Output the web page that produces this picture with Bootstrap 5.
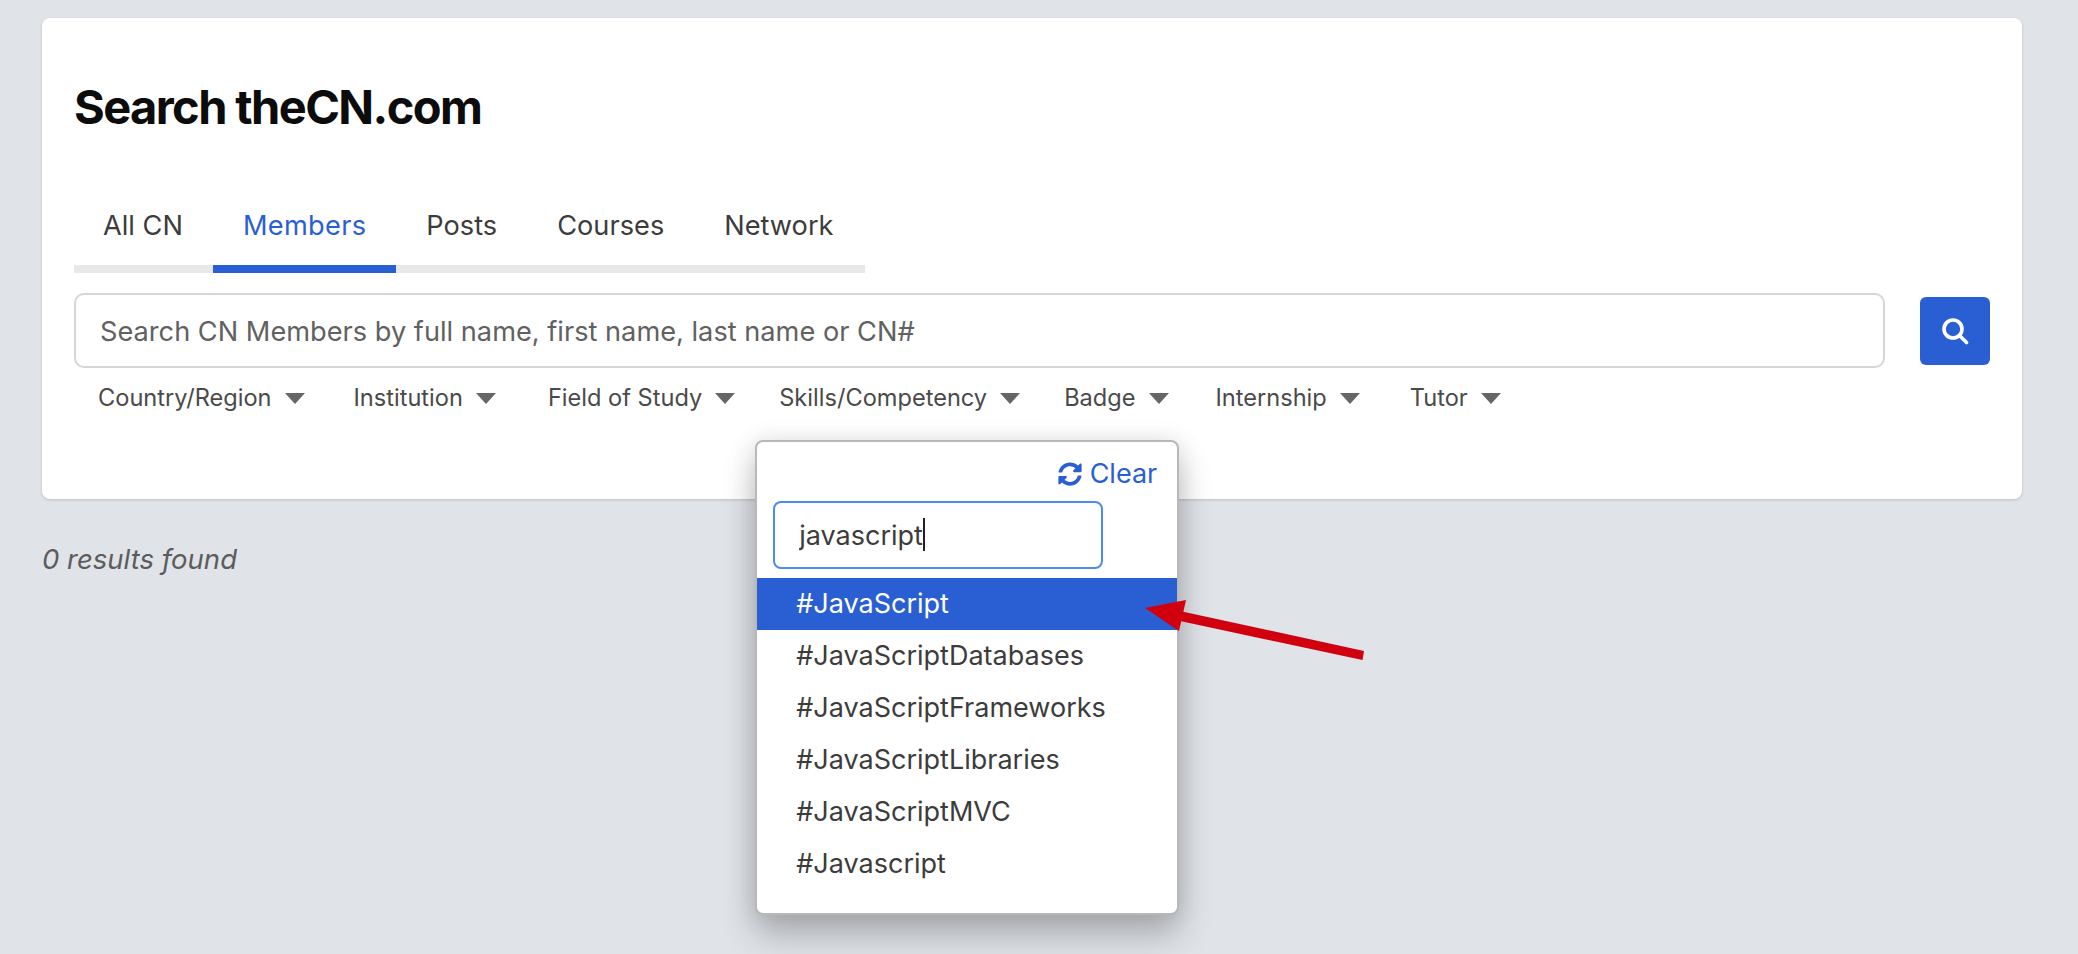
<!DOCTYPE html>
<html lang="en">
<head>
<meta charset="utf-8">
<title>Search theCN.com</title>
<link href="https://cdn.jsdelivr.net/npm/bootstrap@5.3.0/dist/css/bootstrap.min.css" rel="stylesheet">
<style>
html,body{height:954px;overflow:hidden}
body{background:#e0e3e8;font-family:"Inter","Liberation Sans",sans-serif;color:#3c3c3c;position:relative}
.page-wrap{padding:18px 0 0 42px;width:2022px}
.search-panel{background:#fff;border:0;border-radius:8px;box-shadow:0 1px 3px rgba(0,0,0,.16);height:481px;padding:0 32px}
.panel-title{font-family:"Inter","Liberation Sans",sans-serif;font-size:47px;font-weight:700;line-height:54px;letter-spacing:-1.6px;color:#0c0c0c;margin:62px 0 0}
.tab-strip{width:791px;margin-top:62px;border-bottom:8px solid #e8e8e8;flex-wrap:nowrap}
.tab-strip .nav-link{font-size:27.2px;line-height:40px;color:#3c3c3c;padding:10px 30px 19px;margin-bottom:-8px;border-bottom:8px solid transparent;border-radius:0;white-space:nowrap}
.tab-strip .nav-item:first-child .nav-link{padding-left:29px;padding-right:30px}
.tab-strip .nav-link.active{color:#2a5fd3;border-bottom-color:#2a5fd3;letter-spacing:.3px}
.search-row{margin-top:20px;height:75px}
.search-field.form-control{width:1811px;height:75px;border:2px solid #d6d6d6;border-radius:10px;font-size:27.2px;padding:1px 24px 0;color:#3c3c3c}
.search-field.form-control::placeholder{color:#616161;opacity:1}
.search-go.btn{width:70px;height:68px;background:#2a5fd3;border:0;border-radius:6px;margin-left:35px;padding:0;display:flex;align-items:center;justify-content:center}
.filter-row{display:flex;margin-top:11px;height:38px;padding-left:24px}
.filter-item{position:relative;display:flex;align-items:center;margin-right:48px;font-size:23.6px;line-height:38px;color:#4a4a4a;white-space:nowrap}
.filter-item:nth-child(1){margin-right:49px}
.filter-item:nth-child(2){margin-right:52px}
.filter-item:nth-child(3){margin-right:44px}
.filter-item:nth-child(4){margin-right:44px}
.filter-item:nth-child(5){margin-right:47px}
.filter-item:nth-child(6){margin-right:50px}
.filter-tri{display:inline-block;width:0;height:0;border-left:10px solid transparent;border-right:10px solid transparent;border-top:11px solid #666;margin-left:13px;margin-top:1px}
.filter-menu.dropdown-menu{display:block;position:absolute;left:-24px;top:61px;width:424px;height:475px;padding:0;background:#fff;border:2px solid #b8b8b8;border-radius:8px;box-shadow:0 20px 34px rgba(0,0,0,.24),0 0 24px rgba(0,0,0,.1);z-index:5;white-space:normal}
.clear-link{display:flex;justify-content:flex-end;align-items:center;gap:8px;color:#2a5fd3;font-size:27px;line-height:32px;height:32px;padding:16px 20px 0 0;box-sizing:content-box;text-decoration:none}
.menu-search{position:relative;width:330px;height:68px;margin:11px 0 0 16px}
.menu-search .form-control{width:100%;height:100%;border:2px solid #4a8bf5;border-radius:8px;font-size:27px;padding:0 24px;color:#3c3c3c;box-shadow:none}
.text-caret{position:absolute;left:150px;top:17px;width:2px;height:33px;background:#222}
.tag-list{margin-top:9px}
.tag-list .list-group-item{border:0;border-radius:0;height:52px;padding:0 0 0 39px;font-size:27px;line-height:52px;color:#3c3c3c;background:transparent}
.tag-list .list-group-item.active{background:#2a5fd3;color:#fff}
.results-note{font-style:italic;font-size:27.5px;line-height:36px;color:#5c5c5c;margin:42px 0 0}
.pointer-arrow{position:absolute;left:1140px;top:595px;width:230px;height:70px;z-index:10}
</style>
</head>
<body>
<div class="page-wrap">
  <div class="card search-panel">
    <h1 class="panel-title">Search theCN.com</h1>
    <ul class="nav tab-strip">
      <li class="nav-item"><a class="nav-link" href="#">All CN</a></li>
      <li class="nav-item"><a class="nav-link active" href="#">Members</a></li>
      <li class="nav-item"><a class="nav-link" href="#">Posts</a></li>
      <li class="nav-item"><a class="nav-link" href="#">Courses</a></li>
      <li class="nav-item"><a class="nav-link" href="#">Network</a></li>
    </ul>
    <div class="d-flex align-items-center search-row">
      <input class="form-control search-field" type="text" placeholder="Search CN Members by full name, first name, last name or CN#">
      <button class="btn search-go" type="button" aria-label="Search">
        <svg width="28" height="28" viewBox="0 0 28 28" fill="none" stroke="#fff" stroke-width="3.6" stroke-linecap="round"><circle cx="12" cy="12" r="9"/><path d="M19 19l6.5 6.5"/></svg>
      </button>
    </div>
    <div class="filter-row">
      <div class="filter-item">Country/Region<span class="filter-tri"></span></div>
      <div class="filter-item">Institution<span class="filter-tri"></span></div>
      <div class="filter-item">Field of Study<span class="filter-tri"></span></div>
      <div class="filter-item">Skills/Competency<span class="filter-tri"></span>
        <div class="dropdown-menu filter-menu">
          <a class="clear-link" href="#">
            <svg width="24" height="24" viewBox="0 0 512 512" fill="#2a5fd3"><path d="M370.72 133.28C339.458 104.008 298.888 87.962 255.848 88c-77.458.068-144.328 53.178-162.791 126.85-1.344 5.363-6.122 9.15-11.651 9.15H24.103c-7.498 0-13.194-6.807-11.807-14.176C33.933 94.924 134.813 8 256 8c66.448 0 126.791 26.136 171.315 68.685L463.03 40.97C478.149 25.851 504 36.559 504 57.941V192c0 13.255-10.745 24-24 24H345.941c-21.382 0-32.09-25.851-16.971-40.971l41.75-41.749zM32 296h134.059c21.382 0 32.09 25.851 16.971 40.971l-41.75 41.75c31.262 29.273 71.835 45.319 114.876 45.28 77.418-.07 144.315-53.144 162.787-126.849 1.344-5.363 6.122-9.15 11.651-9.15h57.304c7.498 0 13.194 6.807 11.807 14.176C478.067 417.076 377.187 504 256 504c-66.448 0-126.791-26.136-171.315-68.685L48.97 471.03C33.851 486.149 8 475.441 8 454.059V320c0-13.255 10.745-24 24-24z"/></svg>
            Clear
          </a>
          <div class="menu-search">
            <input class="form-control" type="text" value="javascript">
            <span class="text-caret"></span>
          </div>
          <ul class="list-group tag-list">
            <li class="list-group-item active">#JavaScript</li>
            <li class="list-group-item">#JavaScriptDatabases</li>
            <li class="list-group-item">#JavaScriptFrameworks</li>
            <li class="list-group-item">#JavaScriptLibraries</li>
            <li class="list-group-item">#JavaScriptMVC</li>
            <li class="list-group-item">#Javascript</li>
          </ul>
        </div>
      </div>
      <div class="filter-item">Badge<span class="filter-tri"></span></div>
      <div class="filter-item">Internship<span class="filter-tri"></span></div>
      <div class="filter-item">Tutor<span class="filter-tri"></span></div>
    </div>
  </div>
  <p class="results-note">0 results found</p>
</div>
<svg class="pointer-arrow" viewBox="0 0 230 70" fill="#d0000f"><polygon points="5,13 46,5 39,36"/><polygon points="42,16.5 224,56 222.5,65 40,26"/></svg>
</body>
</html>
